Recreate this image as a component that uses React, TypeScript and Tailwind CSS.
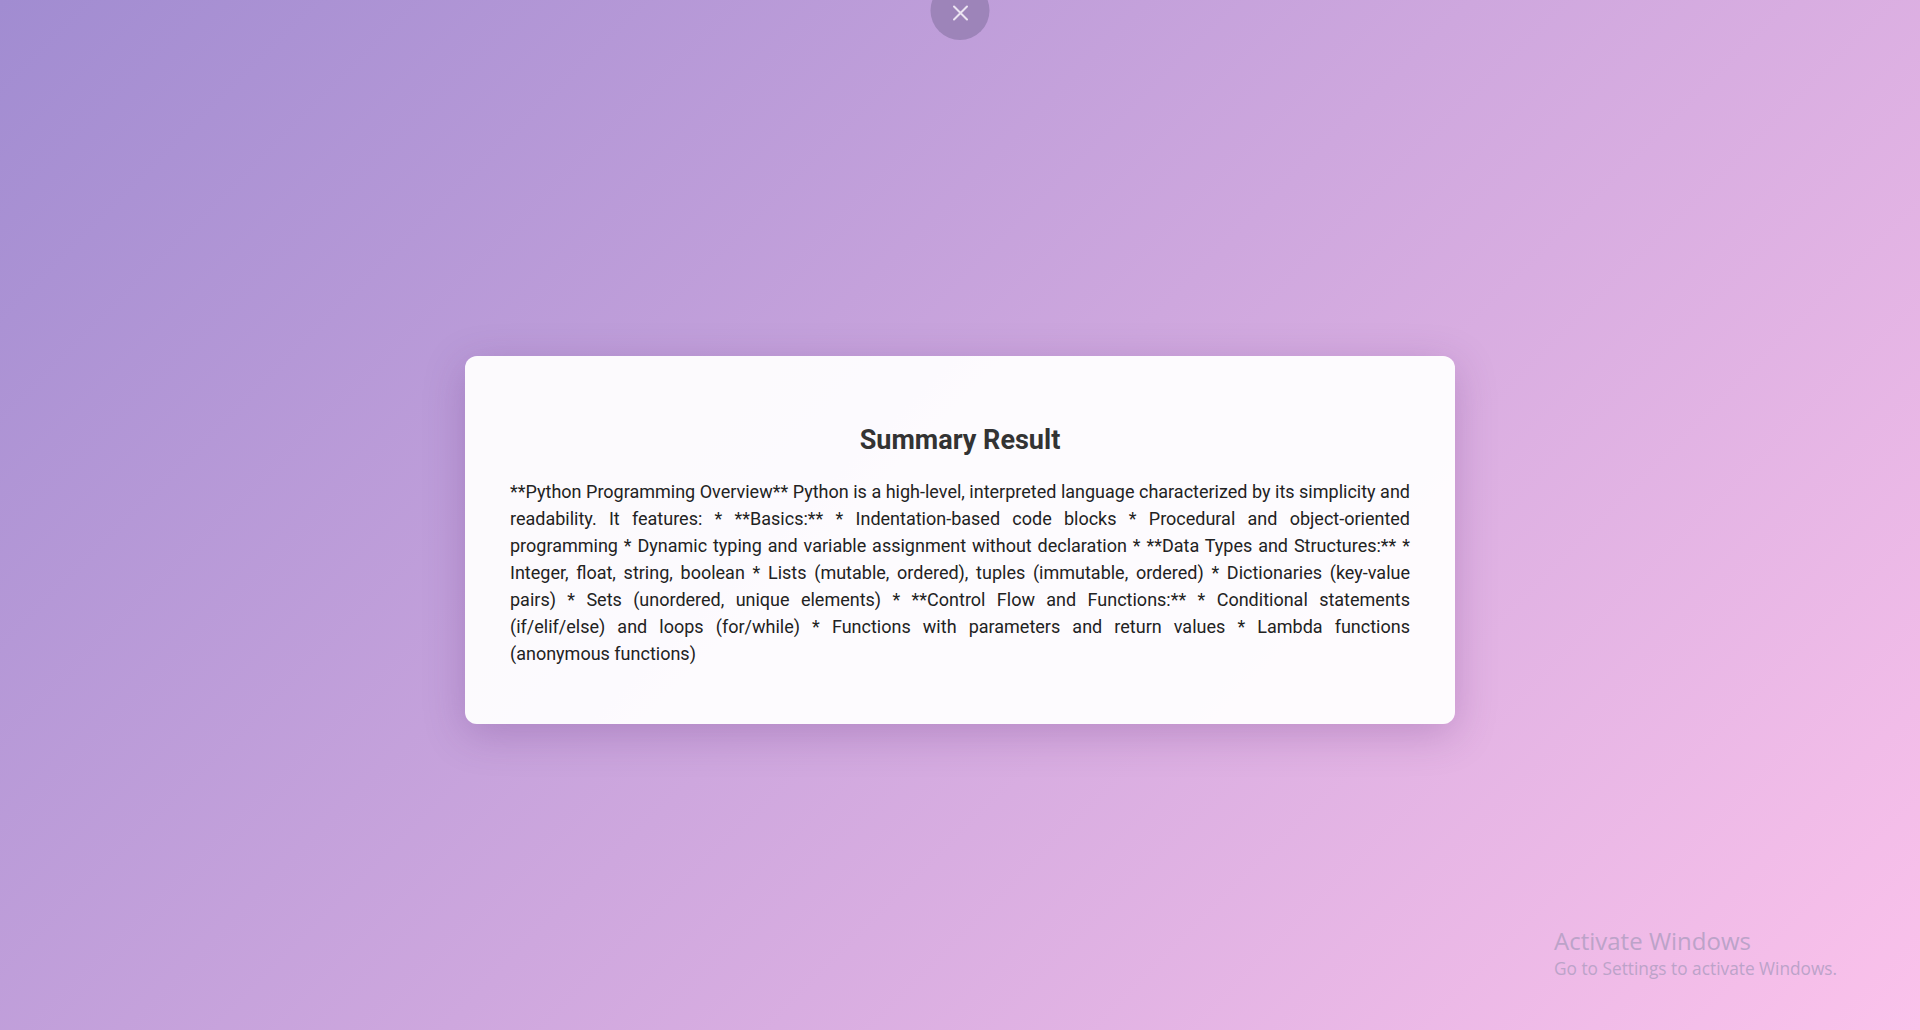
import React from "react";

const text =
  "**Python Programming Overview** Python is a high-level, interpreted language characterized by its simplicity and readability. It features: * **Basics:** * Indentation-based code blocks * Procedural and object-oriented programming * Dynamic typing and variable assignment without declaration * **Data Types and Structures:** * Integer, float, string, boolean * Lists (mutable, ordered), tuples (immutable, ordered) * Dictionaries (key-value pairs) * Sets (unordered, unique elements) * **Control Flow and Functions:** * Conditional statements (if/elif/else) and loops (for/while) * Functions with parameters and return values * Lambda functions (anonymous functions)";

export default function App() {
  return (
    <div
      className="relative w-full h-[1030px] overflow-hidden bg-[linear-gradient(135deg,#a18cd1_0%,#fbc2eb_100%)] flex items-center justify-center"
      style={{ fontFamily: "Roboto, 'Liberation Sans', sans-serif" }}
    >
      <button className="absolute left-1/2 -translate-x-1/2 top-[-19px] w-[59px] h-[59px] rounded-full bg-[#9d84b9] flex items-end justify-center pb-[19px]">
        <svg width="16" height="16" viewBox="0 0 16 16" fill="none" stroke="#ece4f2" strokeWidth="2" strokeLinecap="round">
          <path d="M1.5 1.5L14.5 14.5M14.5 1.5L1.5 14.5" />
        </svg>
      </button>

      <div className="w-[990px] bg-white/95 rounded-[12px] shadow-[0_10px_40px_rgba(90,40,120,0.25)] px-[45px] pt-[69px] pb-[57px] mt-[49px]">
        <h2 className="text-center text-[27px] leading-[30px] font-bold text-[#333]">Summary Result</h2>
        <p className="mt-[23px] text-[18px] leading-[27px] text-[#222] text-justify">{text}</p>
      </div>

      <div className="absolute left-[1554px] top-[925px] text-[#bca3c9]" style={{ fontFamily: "'Segoe UI', 'Open Sans', 'Noto Sans', sans-serif" }}>
        <div className="text-[24px] leading-[32px]">Activate Windows</div>
        <div className="text-[17.3px] leading-[24px]">Go to Settings to activate Windows.</div>
      </div>
    </div>
  );
}
